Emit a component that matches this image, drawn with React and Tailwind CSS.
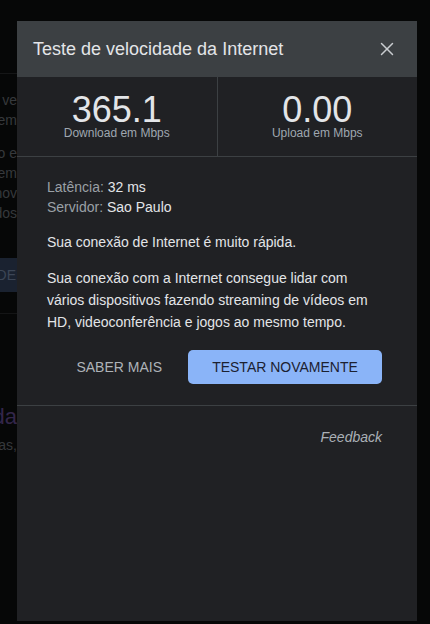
import React from 'react';
import { X } from 'lucide-react';

const bgLines = [
  { text: 'Execute um teste de ve', mt: 'mt-4' },
  { text: 'poucos segundos em', mt: '' },
  { text: 'O teste de velocidade mede a sua conexão e', mt: 'mt-[13px]' },
  { text: 'serão transferidos em', mt: '' },
  { text: 'conexão geralmente leva menos de um nov', mt: '' },
  { text: 'velocidade dos', mt: '' },
];

const Stat = ({ value, label, border }) => (
  <div className={`flex flex-1 flex-col items-center pt-[18px] ${border ? 'border-r border-[#3c4043]' : ''}`}>
    <span className="text-[36px] leading-[30px] text-[#e3e5e8]">{value}</span>
    <span className="text-[12px] leading-4 text-[#9fa7b0]">{label}</span>
  </div>
);

const App = () => {
  return (
    <div className="relative h-[624px] w-[430px] overflow-hidden bg-[#060707] font-['Liberation_Sans',Arial,sans-serif]">
      {/* page behind the dialog */}
      <div className="flex w-[17px] flex-col overflow-hidden text-[14px] leading-5 text-[#36393c]">
        <div className="h-[74px] shrink-0 border-b border-[#151617]" />
        {bgLines.map((l, i) => (
          <div key={i} className={`flex justify-end whitespace-nowrap ${l.mt}`}>{l.text}</div>
        ))}
        <div className="mt-[35px] flex h-[34px] items-center justify-end whitespace-nowrap bg-[#1a2230] pr-px text-[#3c4656]">
          TESTAR NOVAMENTE DE
        </div>
        <div className="mt-[21px] border-t border-[#141516]" />
        <div className="mt-[89px] flex justify-end whitespace-nowrap text-[22px] leading-7 text-[#33264a]">
          Teste de velocida
        </div>
        <div className="mt-1 flex justify-end whitespace-nowrap">resultados de pesquisas,</div>
      </div>

      {/* dialog */}
      <div className="absolute inset-0 pl-[17px] pt-[21px]">
        <div className="flex h-[600px] w-[400px] flex-col bg-[#202124]">
          <div className="flex h-[56px] shrink-0 items-center justify-between bg-[#3c4043] pl-4 pr-[19px]">
            <span className="text-[18px] text-[#e3e5e8]">Teste de velocidade da Internet</span>
            <X size={22} strokeWidth={1.6} className="text-[#c9ccd0]" />
          </div>

          <div className="flex h-[80px] shrink-0 border-b border-[#3c4043]">
            <Stat value="365.1" label="Download em Mbps" border />
            <Stat value="0.00" label="Upload em Mbps" />
          </div>

          <div className="flex flex-col pl-[30px] pr-[35px] pt-5 text-[14px] leading-5 text-[#e3e5e8]">
            <div>
              <span className="text-[#9aa0a6]">Latência: </span>32 ms
            </div>
            <div>
              <span className="text-[#9aa0a6]">Servidor: </span>Sao Paulo
            </div>
            <p className="mt-[15px]">Sua conexão de Internet é muito rápida.</p>
            <p className="mt-[15px] leading-[22px]">
              Sua conexão com a Internet consegue lidar com vários dispositivos fazendo streaming de vídeos em HD,
              videoconferência e jogos ao mesmo tempo.
            </p>
            <div className="mt-[17px] flex items-center justify-end gap-[10px]">
              <button className="h-[34px] px-4 text-[14px] text-[#aeb3b8]">SABER MAIS</button>
              <button className="h-[34px] w-[194px] rounded-[5px] bg-[#8ab4f8] text-[14px] text-[#1c2130]">
                TESTAR NOVAMENTE
              </button>
            </div>
          </div>

          <div className="mt-[21px] border-t border-[#3c4043]" />
          <div className="mt-[21px] pr-[35px] text-right text-[14px] italic leading-5 text-[#aab0b6]">Feedback</div>
        </div>
      </div>
    </div>
  );
};

export default App;
